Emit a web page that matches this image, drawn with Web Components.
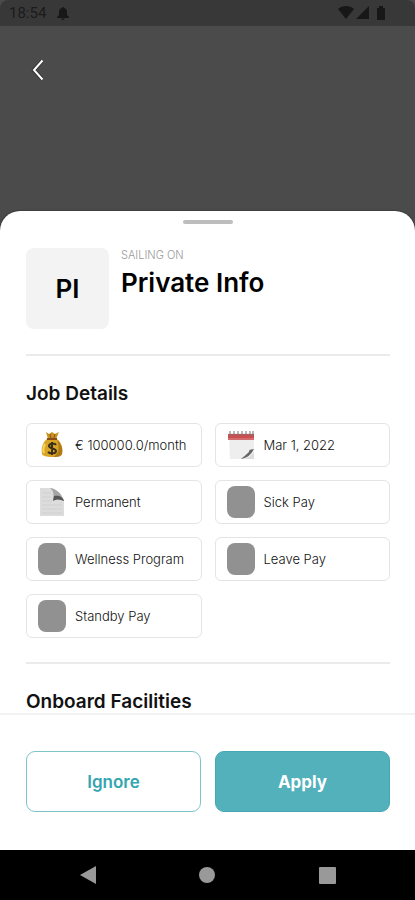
<!DOCTYPE html>
<html lang="en">
<head>
<meta charset="utf-8">
<meta name="viewport" content="width=device-width, initial-scale=1">
<title>Private Info</title>
<style>
  html, body { margin: 0; height: 100%; background: #4b4b4b; }
  body { font-family: Inter, "Liberation Sans", sans-serif; color: #111; }
</style>
</head>
<body>
<job-screen>
  <status-bar slot="top">18:54</status-bar>
  <back-header slot="top"></back-header>
  <bottom-sheet>
    <company-head initials="PI"><span slot="label">SAILING ON</span>Private Info</company-head>
    <detail-section heading="Job Details">
      <detail-chip icon="money">€ 100000.0/month</detail-chip>
      <detail-chip icon="calendar">Mar 1, 2022</detail-chip>
      <detail-chip icon="page">Permanent</detail-chip>
      <detail-chip>Sick Pay</detail-chip>
      <detail-chip>Wellness Program</detail-chip>
      <detail-chip>Leave Pay</detail-chip>
      <detail-chip>Standby Pay</detail-chip>
    </detail-section>
    <detail-section heading="Onboard Facilities"></detail-section>
    <action-button slot="actions">Ignore</action-button>
    <action-button slot="actions" primary>Apply</action-button>
  </bottom-sheet>
  <system-nav slot="bottom"></system-nav>
</job-screen>

<script>
const define = (name, html) => {
  const template = document.createElement('template');
  customElements.define(name, class extends HTMLElement {
    constructor() {
      super();
      template.innerHTML = typeof html === 'function' ? html(this) : html;
      this.attachShadow({ mode: 'open' }).append(template.content.cloneNode(true));
    }
  });
};

define('job-screen', `
<style>
  :host { display: flex; flex-direction: column; height: 100vh; }
  ::slotted(bottom-sheet) { flex: 1; min-height: 0; }
</style>
<slot name="top"></slot><slot></slot><slot name="bottom"></slot>`);

define('status-bar', `
<style>
  :host { display: flex; align-items: center; height: 26px; padding: 0 28px 0 9px; gap: 11px;
    background: linear-gradient(#383838, #383838) padding-box; border-radius: 8px 8px 0 0;
    color: #1b1b1b; font: 15px/26px Roboto, sans-serif; }
  .signal { display: flex; gap: 2px; margin-left: auto; }
  svg { display: block; fill: #171717; }
</style>
<slot></slot>
<svg width="12" height="13" viewBox="0 0 12 13"><path d="M6 0a1 1 0 0 1 1 1c2 .5 3 2 3 4v3l2 2v1H0v-1l2-2V5c0-2 1-3.500 3-4a1 1 0 0 1 1-1zM4.500 11.500h3a1.500 1.500 0 0 1-3 0z"/></svg>
<span class="signal">
  <svg width="16" height="13" viewBox="0 0 16 13"><path d="M0 3C4-1 12-1 16 3L8 13z"/></svg>
  <svg width="13" height="13" viewBox="0 0 13 13"><path d="M13 0v13H0z"/></svg>
  <svg width="16" height="14" viewBox="0 0 16 14"><path d="M6 2h2V0h4v2h2v12H6z"/></svg>
</span>`);

define('back-header', `
<style>
  :host { display: block; box-sizing: border-box; height: 185px; padding: 28px 22px; background: #4b4b4b; }
  button { display: grid; place-items: center; width: 32px; height: 32px; padding: 0; border: 0; background: none; }
</style>
<button aria-label="Back"><svg width="14" height="22" viewBox="0 0 14 22" fill="none"><path d="M11 2 3 11l8 9" stroke="#333" stroke-width="4"/><path d="M11.500 1.500 3 11l8.500 9.500" stroke="#fff" stroke-width="2"/></svg></button>`);

define('bottom-sheet', `
<style>
  :host { display: flex; flex-direction: column; background: #fff; border-radius: 20px 20px 0 0; box-shadow: 0 0 2px #222; }
  .grip { width: 50px; height: 4px; margin: 9px auto 0; border-radius: 2px; background: #bdbdbd; }
  main { flex: 1; min-height: 0; overflow: hidden; padding: 24px 25px 0 26px; }
  footer { display: grid; grid-template-columns: 1fr 1fr; gap: 14px; padding: 36px 25px 38px 26px; border-top: 2px solid #f2f2f2; }
</style>
<div class="grip"></div>
<main><slot></slot></main>
<footer><slot name="actions"></slot></footer>`);

define('company-head', el => `
<style>
  :host { display: flex; gap: 12px; padding-bottom: 25px; }
  .logo { display: grid; place-items: center; width: 83px; height: 81px; border-radius: 8px; background: #f3f3f3;
    color: #000; font-size: 26px; font-weight: 600; }
  .label { color: #999; font-size: 11px; line-height: 14px; font-weight: 300; }
  h1 { margin: 4px 0 0; color: #000; font-size: 26px; line-height: 34px; font-weight: 600; }
</style>
<div class="logo">${el.getAttribute('initials')}</div>
<div><div class="label"><slot name="label"></slot></div><h1><slot></slot></h1></div>`);

define('detail-section', el => `
<style>
  :host { display: block; border-top: 2px solid #ebebeb; padding: 24px 0 24px; }
  h2 { margin: 0 0 15px; color: #111; font-size: 19px; line-height: 28px; font-weight: 600; }
  .grid { display: grid; grid-template-columns: 1fr 1fr; gap: 13px; }
</style>
<h2>${el.getAttribute('heading')}</h2>
<div class="grid"><slot></slot></div>`);

const icons = {
  money: `<svg width="28" height="30" viewBox="0 0 28 30">
    <path d="M9 9C4 13 3 19 4 24c1 4 18 4 20 0 1-5 0-11-5-15z" fill="#d9a324"/>
    <path d="M19 10c5 4 6 10 5 14-1 3-5 3-9 3 6-3 7-9 4-17z" fill="#ae7918"/>
    <path d="M8 2l3 2 3-2 3 2 4-2-3 7H10z" fill="#c99022"/>
    <path d="M12 4l1 4M17 4l-1 4" stroke="#8a5a12" fill="none"/>
    <path d="M9 9h10" stroke="#8a4b16" stroke-width="2"/>
    <path d="M7 14c-2 4-2 7-1 9" stroke="#f4d463" stroke-width="2" fill="none"/>
    <path d="M18 15c-1-2-7-2-7 1s7 2 7 5-6 3-8 1M14 12v13" stroke="#39301a" stroke-width="2" fill="none"/></svg>`,
  calendar: `<svg width="28" height="30" viewBox="0 0 28 30">
    <path d="M2 3h25v17l-8 9H3z" fill="#eee"/><path d="M1 4h26v6H1z" fill="#c94f50"/>
    <path d="M1 9h26" stroke="#dd8b89"/>
    <path d="M3 1v5M7 1v5M11 1v5M15 1v5M19 1v5M23 1v5M26 1v5" stroke="#777"/>
    <path d="M27 19c-3 1-5 0-5 3-3 3-6 5-8 7 6-1 10-4 13-10z" fill="#666"/>
    <path d="M27 21v8H16c5-1 9-4 11-8z" fill="#ddd"/></svg>`,
  page: `<svg width="28" height="30" viewBox="0 0 28 30">
    <path d="M2 1h12c6 3 10 8 12 14v14H2z" fill="#dcdcdc"/>
    <path d="M4 6h9M4 10h9M4 14h10M4 18h20M4 22h20M4 26h20" stroke="#d0d0d0"/>
    <path d="M12 1c7 1 12 6 14 13-4-2-8-2-11 0 1-5 1-10-3-13z" fill="#a5a5a5"/>
    <path d="M16 9c5-1 9 1 10 5-4-2-8-2-11 0z" fill="#555"/></svg>`
};

define('detail-chip', el => `
<style>
  :host { display: flex; align-items: center; gap: 9px; box-sizing: border-box; height: 44px; padding: 0 11px;
    border: 1px solid #e4e4e4; border-radius: 6px; color: #111; font-size: 13px; line-height: 18px; font-weight: 300; white-space: nowrap; }
  .blank { width: 28px; height: 32px; border-radius: 8px; background: #919191; }
  svg, .blank { flex: none; display: block; }
</style>
${icons[el.getAttribute('icon')] || '<span class="blank"></span>'}<span><slot></slot></span>`);

define('action-button', el => `
<style>
  :host { display: block; }
  button { width: 100%; height: 61px; border: 1px solid #7fc4cb; border-radius: 9px; background: #fff;
    color: #35a5b0; font: 600 17px/24px Inter, sans-serif; }
  :host([primary]) button { border-color: #45a9b3; background: #53b1bb; color: #fff; font-weight: 700; }
</style>
<button><slot></slot></button>`);

define('system-nav', `
<style>
  :host { display: grid; grid-template-columns: 1fr 1fr 1fr; place-items: center; box-sizing: border-box; height: 50px; padding: 0 28px; background: #000; }
  button { display: grid; padding: 0; border: 0; background: none; }
  svg { fill: #999; }
</style>
<button aria-label="Back"><svg width="18" height="18" viewBox="0 0 18 18"><path d="M17 0v18L1 9z"/></svg></button>
<button aria-label="Home"><svg width="18" height="18" viewBox="0 0 18 18"><circle cx="9" cy="9" r="8"/></svg></button>
<button aria-label="Recents"><svg width="18" height="18" viewBox="0 0 18 18"><rect x="1" y="1" width="17" height="17" rx="1"/></svg></button>`);
</script>
</body>
</html>
